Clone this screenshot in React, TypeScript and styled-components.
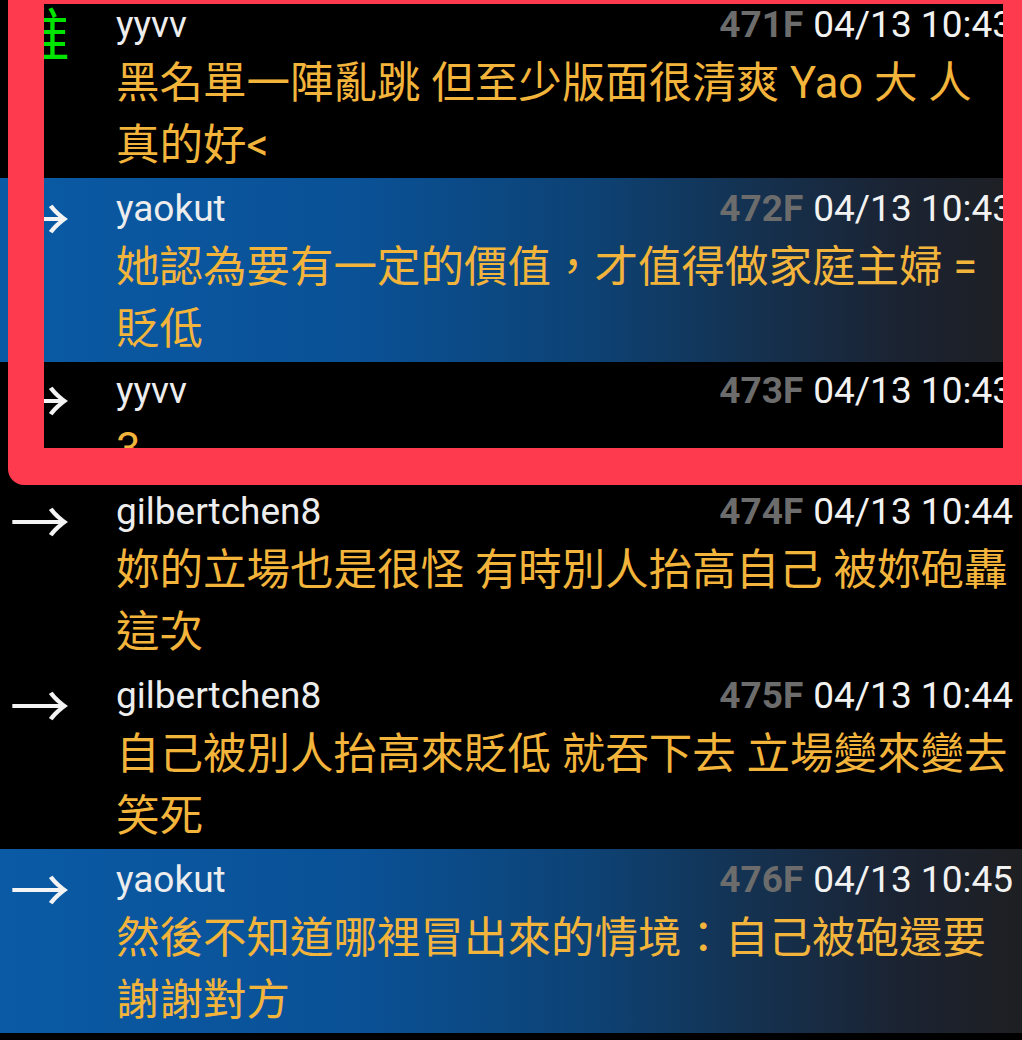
import React from "react";
import styled, { createGlobalStyle } from "styled-components";

const GlobalStyle = createGlobalStyle`
  html, body {
    margin: 0;
    padding: 0;
    background: #000;
  }
  body {
    overflow: hidden;
  }
`;

const Screen = styled.div`
  position: relative;
  width: 1022px;
  height: 1040px;
  overflow: hidden;
  background: #000;
  font-family: Roboto, "Noto Sans CJK TC", sans-serif;
`;

const List = styled.div`
  display: flex;
  flex-direction: column;
  margin-top: -6px;
`;

const Row = styled.div<{ $hl?: boolean; $short?: boolean }>`
  display: grid;
  grid-template-columns: 116px 1fr;
  padding: ${(p) => (p.$short ? "1px 0 0" : "3px 0 1px")};
  background: ${(p) =>
    p.$hl
      ? "linear-gradient(to right, #0a5aa5 0%, #0a5196 35%, #0d4274 58%, #15304d 75%, #1b2332 88%, #1e1f22 100%)"
      : "#000"};
`;

const Tag = styled.div<{ $color: string }>`
  font-family: "Noto Sans CJK TC", sans-serif;
  font-size: 60px;
  line-height: 60px;
  color: ${(p) => p.$color};
  padding-left: 10px;
  margin-top: 5px;
  white-space: nowrap;
`;

const Body = styled.div`
  min-width: 0;
  padding-right: 9px;
`;

const Header = styled.div`
  display: flex;
  align-items: baseline;
  justify-content: space-between;
  height: 56px;
  line-height: 56px;
  font-size: 37px;
`;

const User = styled.span`
  color: #ededed;
`;

const Meta = styled.span`
  color: #f2f2f2;
  white-space: nowrap;
`;

const Floor = styled.b`
  color: #6c6c6c;
  font-weight: 700;
  margin-right: 10px;
`;

const Line = styled.div`
  color: #f2b43b;
  font-size: 43.5px;
  line-height: 62px;
  white-space: nowrap;
`;

const Highlight = styled.div`
  position: absolute;
  left: 8px;
  right: -20px;
  top: -30px;
  height: 515px;
  box-sizing: border-box;
  border-style: solid;
  border-color: #fe3a4e;
  border-width: 34px 39px 37px 36px;
  border-radius: 16px;
  pointer-events: none;
`;

type Comment = {
  tag: string;
  tagColor: string;
  user: string;
  floor: string;
  time: string;
  lines: string[];
  hl?: boolean;
};

const comments: Comment[] = [
  {
    tag: "推",
    tagColor: "#00e400",
    user: "yyvv",
    floor: "471F",
    time: "04/13 10:43",
    lines: ["黑名單一陣亂跳 但至少版面很清爽 Yao 大 人", "真的好<"],
  },
  {
    tag: "→",
    tagColor: "#f4f4f4",
    user: "yaokut",
    floor: "472F",
    time: "04/13 10:43",
    lines: ["她認為要有一定的價值，才值得做家庭主婦 =", "貶低"],
    hl: true,
  },
  {
    tag: "→",
    tagColor: "#f4f4f4",
    user: "yyvv",
    floor: "473F",
    time: "04/13 10:43",
    lines: ["3"],
  },
  {
    tag: "→",
    tagColor: "#f4f4f4",
    user: "gilbertchen8",
    floor: "474F",
    time: "04/13 10:44",
    lines: ["妳的立場也是很怪 有時別人抬高自己 被妳砲轟", "這次"],
  },
  {
    tag: "→",
    tagColor: "#f4f4f4",
    user: "gilbertchen8",
    floor: "475F",
    time: "04/13 10:44",
    lines: ["自己被別人抬高來貶低 就吞下去 立場變來變去", "笑死"],
  },
  {
    tag: "→",
    tagColor: "#f4f4f4",
    user: "yaokut",
    floor: "476F",
    time: "04/13 10:45",
    lines: ["然後不知道哪裡冒出來的情境：自己被砲還要", "謝謝對方"],
    hl: true,
  },
];

export default function App() {
  return (
    <>
      <GlobalStyle />
      <Screen>
        <List>
          {comments.map((c) => (
            <Row key={c.floor} $hl={c.hl} $short={c.lines.length === 1}>
              <Tag $color={c.tagColor}>{c.tag}</Tag>
              <Body>
                <Header>
                  <User>{c.user}</User>
                  <Meta>
                    <Floor>{c.floor}</Floor>
                    {c.time}
                  </Meta>
                </Header>
                {c.lines.map((l, i) => (
                  <Line key={i}>{l}</Line>
                ))}
              </Body>
            </Row>
          ))}
        </List>
        <Highlight />
      </Screen>
    </>
  );
}
